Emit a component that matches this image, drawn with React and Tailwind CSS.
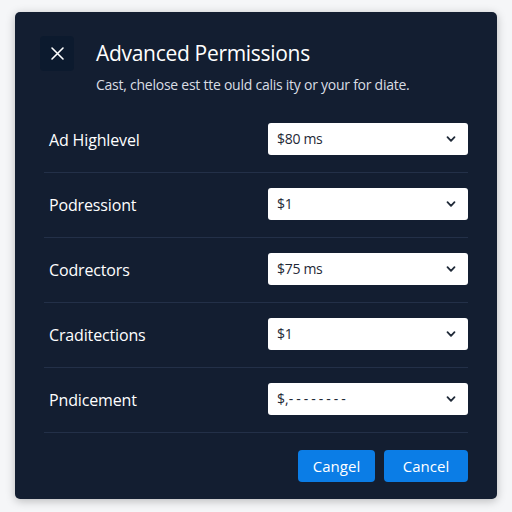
import React from "react";

const rows = [
  { label: "Ad Highlevel", value: "$80 ms" },
  { label: "Podressiont", value: "$1" },
  { label: "Codrectors", value: "$75 ms" },
  { label: "Craditections", value: "$1" },
  { label: "Pndicement", value: "dash" },
];

function Chevron() {
  return (
    <svg width="12" height="12" viewBox="0 0 12 12" fill="none">
      <path d="M2.5 4.2 L6 7.8 L9.5 4.2" stroke="#1f2937" strokeWidth="1.8" strokeLinecap="round" strokeLinejoin="round" />
    </svg>
  );
}

export default function App() {
  return (
    <div
      className="w-[512px] h-[512px] bg-[#f5f6f8] pt-[12px] pl-[15px]"
      style={{ fontFamily: '"Open Sans", "Noto Sans", sans-serif' }}
    >
      <div className="w-[482px] h-[487px] bg-[#131e31] rounded-[5px] shadow-[0_2px_10px_rgba(0,0,0,0.25)] px-[29px] pt-[24px]">
        <div className="flex">
          <div className="w-[34px] h-[35px] ml-[-4px] rounded-[4px] bg-[#0c1a2e] flex items-center justify-center">
            <svg width="15" height="15" viewBox="0 0 15 15" fill="none">
              <path d="M2 2 L13 13 M13 2 L2 13" stroke="#ffffff" strokeWidth="1.6" strokeLinecap="round" />
            </svg>
          </div>
          <div className="ml-[22px] flex flex-col">
            <div className="h-[35px] leading-[35px] text-[21px] text-white tracking-[-0.3px]">Advanced Permissions</div>
            <div className="mt-[4px] leading-[20px] text-[14px] text-[#d9dde4] tracking-[-0.25px]">
              Cast, chelose est tte ould calis ity or your for diate.
            </div>
          </div>
        </div>
        <div className="mt-[13px]">
          {rows.map((r, i) => (
            <div key={i} className="h-[65px] border-b border-[#233048] flex items-center justify-between pl-[5px]">
              <span className="text-[16px] text-white tracking-[-0.15px]">{r.label}</span>
              <div className="w-[200px] h-[32px] bg-white rounded-[3px] flex items-center justify-between pl-[9px] pr-[11px] mt-[-3px]">
                {r.value === "dash" ? (
                  <span className="text-[14px] text-[#1f2937]">
                    $,<span className="tracking-[3px]">--------</span>
                  </span>
                ) : (
                  <span className="text-[14px] text-[#1f2937] tracking-[-0.3px]">{r.value}</span>
                )}
                <Chevron />
              </div>
            </div>
          ))}
        </div>
        <div className="flex justify-end gap-[9px] pt-[17px]">
          <button className="w-[77px] h-[32px] rounded-[4px] bg-[#0b7de6] text-white text-[15px]">Cangel</button>
          <button className="w-[84px] h-[32px] rounded-[4px] bg-[#0b7de6] text-white text-[15px]">Cancel</button>
        </div>
      </div>
    </div>
  );
}
